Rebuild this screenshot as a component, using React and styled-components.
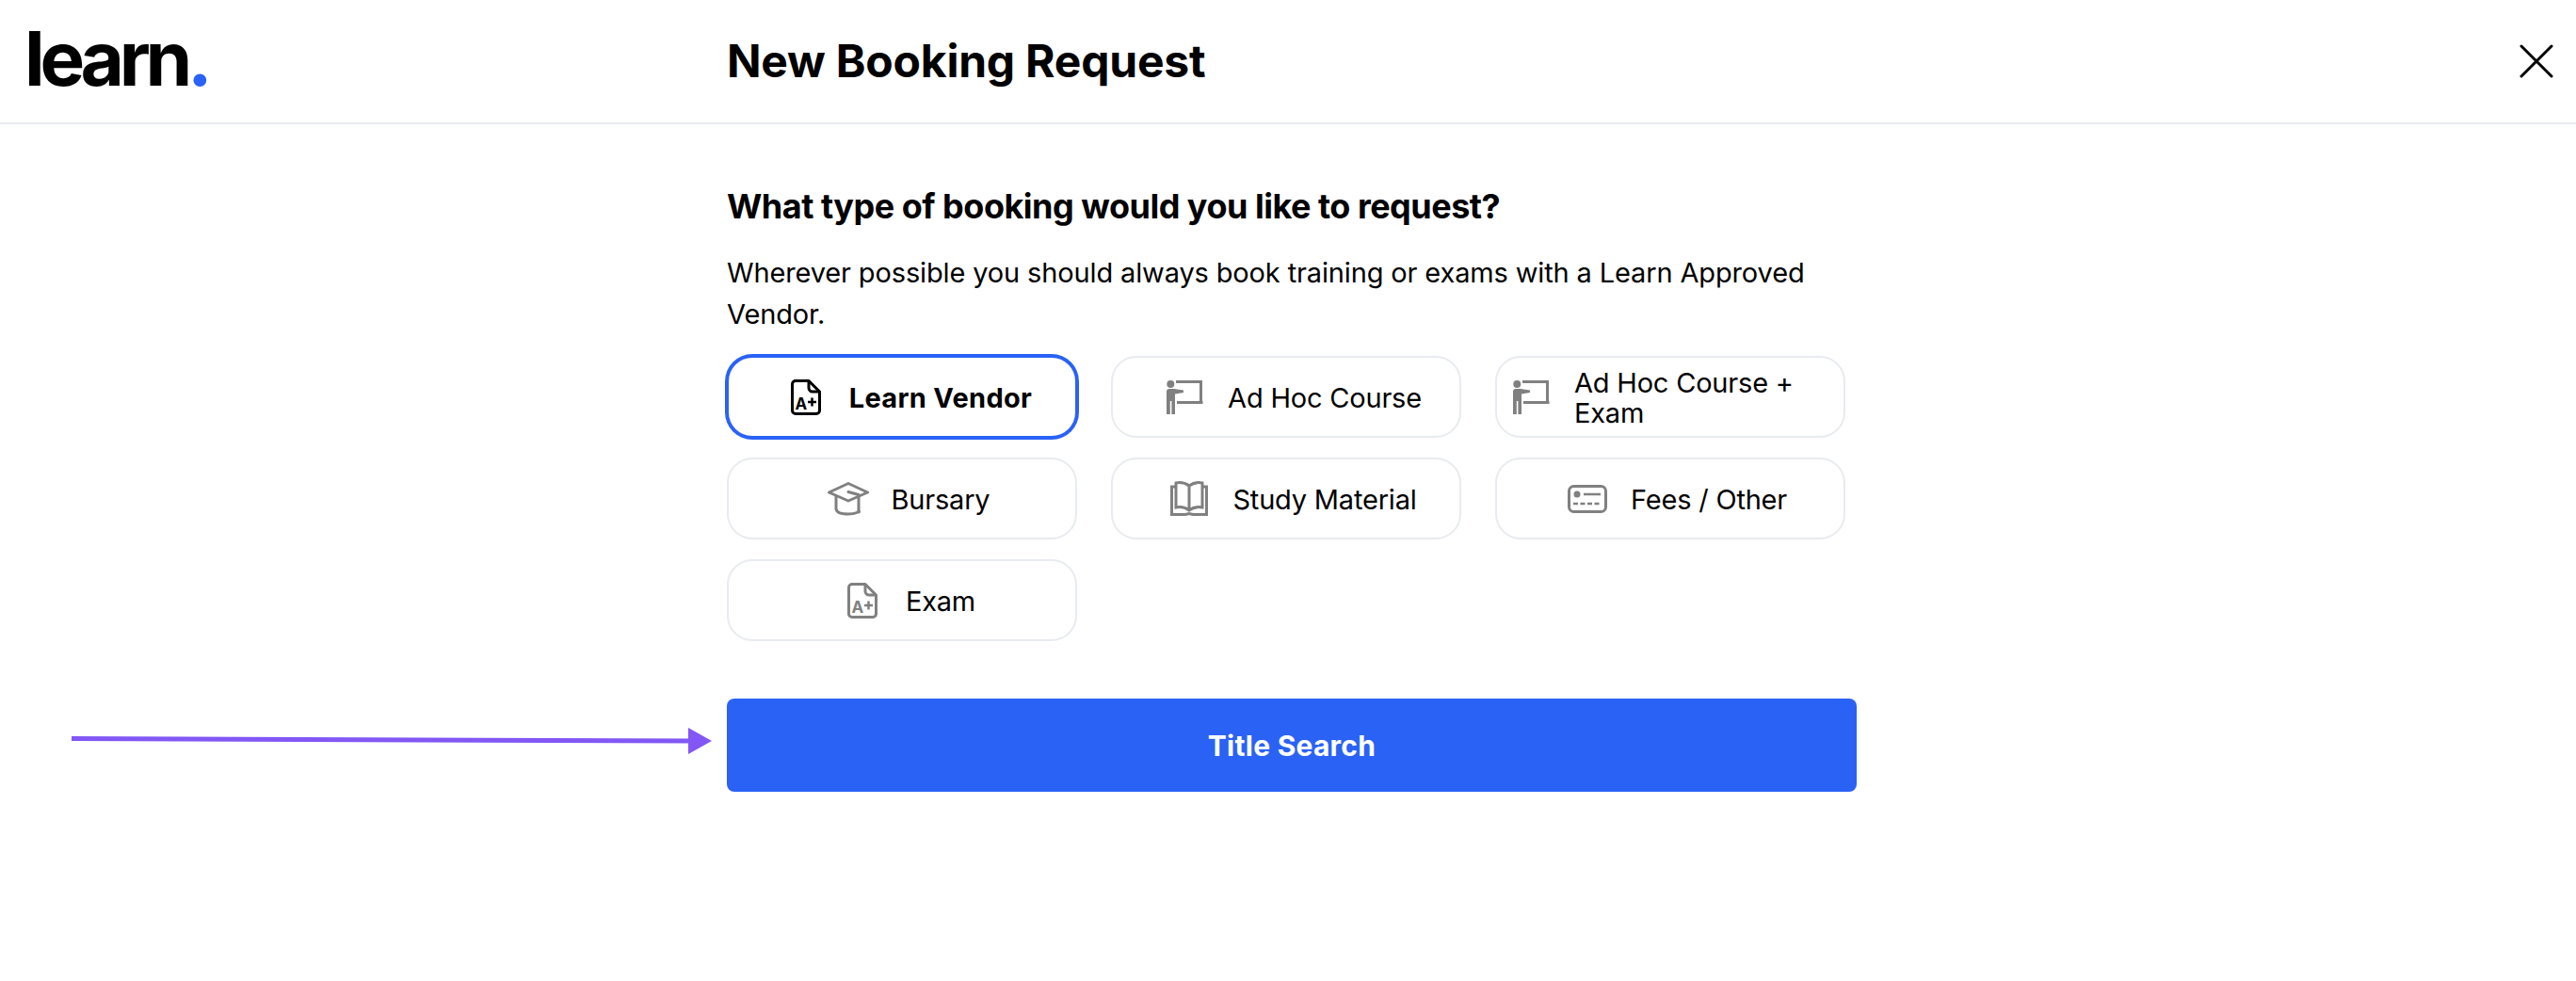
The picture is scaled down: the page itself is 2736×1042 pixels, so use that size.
import React from 'react'
import styled, { createGlobalStyle } from 'styled-components'

const GlobalStyle = createGlobalStyle`
  html, body {
    margin: 0;
    padding: 0;
    background: #fff;
    color: #000;
    font-family: Inter, "Liberation Sans", sans-serif;
  }
  * { box-sizing: border-box; }
`

const Page = styled.div`
  position: relative;
  width: 2736px;
  height: 1042px;
  overflow: hidden;
`

const Header = styled.header`
  display: flex;
  align-items: center;
  height: 132px;
  padding: 0 24px 0 26px;
  border-bottom: 2px solid #e8ebf0;
`

const Logo = styled.div`
  width: 746px;
  font-size: 80px;
  line-height: 1;
  font-weight: 700;
  letter-spacing: -5.3px;
  margin-top: -6px;

  span { color: #2a62f6; }
`

const Title = styled.h1`
  flex: 1;
  margin: 0;
  font-size: 48px;
  line-height: 60px;
  font-weight: 700;
  letter-spacing: -0.22px;
`

const CloseButton = styled.button`
  display: flex;
  padding: 0;
  border: 0;
  background: none;
`

const Main = styled.main`
  width: 1200px;
  margin-left: 772px;
  padding-top: 65px;
`

const Question = styled.h2`
  margin: 0 0 27px;
  font-size: 36px;
  line-height: 44px;
  font-weight: 700;
  letter-spacing: -0.5px;
`

const Intro = styled.p`
  margin: 0 0 22px;
  font-size: 29px;
  line-height: 44px;
  letter-spacing: -0.14px;
`

const Options = styled.div`
  display: grid;
  grid-template-columns: repeat(3, 372px);
  grid-auto-rows: 87px;
  column-gap: 36px;
  row-gap: 21px;
`

const Option = styled.div`
  display: flex;
  align-items: center;
  justify-content: center;
  gap: 22px;
  padding-left: 12px;
  background: #fff;
  border: 2px solid ${p => (p.$active ? '#2a62f6' : '#e8ebf0')};
  border-radius: 27px;
  box-shadow: ${p => (p.$active ? '0 0 0 2px #2a62f6' : 'none')};
  color: ${p => (p.$active ? '#000' : '#808080')};
`

const IconBox = styled.span`
  flex: 0 0 48px;
  display: flex;
  justify-content: center;
`

const OptionLabel = styled.span`
  margin-top: 2px;
  color: #000;
  font-size: 29px;
  line-height: 32px;
  font-weight: ${p => (p.$active ? 700 : 400)};
  letter-spacing: ${p => (p.$active ? '0.3px' : '-0.2px')};
`

const SearchButton = styled.button`
  display: block;
  width: 100%;
  height: 99px;
  margin-top: 61px;
  border: 0;
  border-radius: 8px;
  background: #2a62f6;
  color: #fff;
  font-family: inherit;
  font-size: 30px;
  font-weight: 700;
  letter-spacing: 0.25px;
`

const Arrow = styled.svg`
  position: absolute;
  left: 70px;
  top: 770px;
`

const DocIcon = () => (
  <svg width="32" height="38" viewBox="0 0 32 38" fill="none" stroke="currentColor" strokeWidth="3" strokeLinejoin="round">
    <path d="M5 1.5H19L30.5 13V33a3.5 3.5 0 0 1-3.5 3.5H5A3.5 3.5 0 0 1 1.5 33V5A3.5 3.5 0 0 1 5 1.5Z" />
    <path d="M19 1.5V9a4 4 0 0 0 4 4h7.5" />
    <text x="4.5" y="32" fontFamily="Inter, sans-serif" fontSize="17" fontWeight="700" fill="currentColor" stroke="none">A</text>
    <path d="M22.5 19.5v9M18 24h9" strokeWidth="2.5" />
  </svg>
)

const TeacherIcon = () => (
  <svg width="39" height="36" viewBox="0 0 39 36" fill="none" stroke="currentColor">
    <circle cx="4.3" cy="4" r="4" fill="currentColor" stroke="none" />
    <path d="M0 12a3 3 0 0 1 3-3h5l10 1.5v2.5L9 14.5V36H5.4V22H3.8V36H0Z" fill="currentColor" stroke="none" />
    <path d="M10 1.5H36.5V23.5M11 23.5H38.5" strokeWidth="3" />
  </svg>
)

const HatIcon = () => (
  <svg width="44" height="36" viewBox="0 0 44 36" fill="none" stroke="currentColor" strokeWidth="3" strokeLinejoin="round" strokeLinecap="round">
    <path d="M22 1.5 42.5 11 22 20 1.5 11Z" />
    <path d="M9 15V28c0 4 5 6 13 6 4 0 7-.6 9-1.5" />
    <path d="M22 10.5 33 13.5V31" />
    <circle cx="33" cy="31.5" r="2" fill="currentColor" stroke="none" />
  </svg>
)

const BookIcon = () => (
  <svg width="40" height="37" viewBox="0 0 40 37" fill="none" stroke="currentColor" strokeWidth="3">
    <path d="M20 5C16 2 11 1 6 2V28c5-1 10 0 14 3 4-3 9-4 14-3V2C29 1 24 2 20 5ZM20 5V31" />
    <path d="M6 6H1.5V35.5H16l4-1 4 1H38.5V6H34" />
  </svg>
)

const FeesIcon = () => (
  <svg width="42" height="30" viewBox="0 0 42 30" fill="none" stroke="currentColor" strokeWidth="3">
    <rect x="1.5" y="1.5" width="39" height="27" rx="5" />
    <circle cx="10" cy="10" r="3.5" fill="currentColor" stroke="none" />
    <path d="M17 10H35" strokeWidth="2.5" />
    <path d="M6 20H36" strokeWidth="2.5" strokeDasharray="5 2.5" />
  </svg>
)

const options = [
  { label: 'Learn Vendor', icon: <DocIcon />, active: true },
  { label: 'Ad Hoc Course', icon: <TeacherIcon /> },
  { label: 'Ad Hoc Course + Exam', icon: <TeacherIcon /> },
  { label: 'Bursary', icon: <HatIcon /> },
  { label: 'Study Material', icon: <BookIcon /> },
  { label: 'Fees / Other', icon: <FeesIcon /> },
  { label: 'Exam', icon: <DocIcon /> },
]

const App = () => (
  <Page>
    <GlobalStyle />
    <Header>
      <Logo>learn<span>.</span></Logo>
      <Title>New Booking Request</Title>
      <CloseButton aria-label="Close">
        <svg width="36" height="36" viewBox="0 0 36 36" fill="none" stroke="#000" strokeWidth="3" strokeLinecap="round">
          <path d="M2 2 34 34M34 2 2 34" />
        </svg>
      </CloseButton>
    </Header>
    <Main>
      <Question>What type of booking would you like to request?</Question>
      <Intro>Wherever possible you should always book training or exams with a Learn Approved Vendor.</Intro>
      <Options>
        {options.map(o => (
          <Option key={o.label} $active={o.active}>
            <IconBox>{o.icon}</IconBox>
            <OptionLabel $active={o.active}>{o.label}</OptionLabel>
          </Option>
        ))}
      </Options>
      <SearchButton>Title Search</SearchButton>
    </Main>
    <Arrow width="700" height="40" viewBox="0 0 700 40">
      <path d="M6 14.5 662 17" stroke="#8257f5" strokeWidth="5" />
      <path d="M661 3 686 17 661 31Z" fill="#8257f5" />
    </Arrow>
  </Page>
)

export default App
